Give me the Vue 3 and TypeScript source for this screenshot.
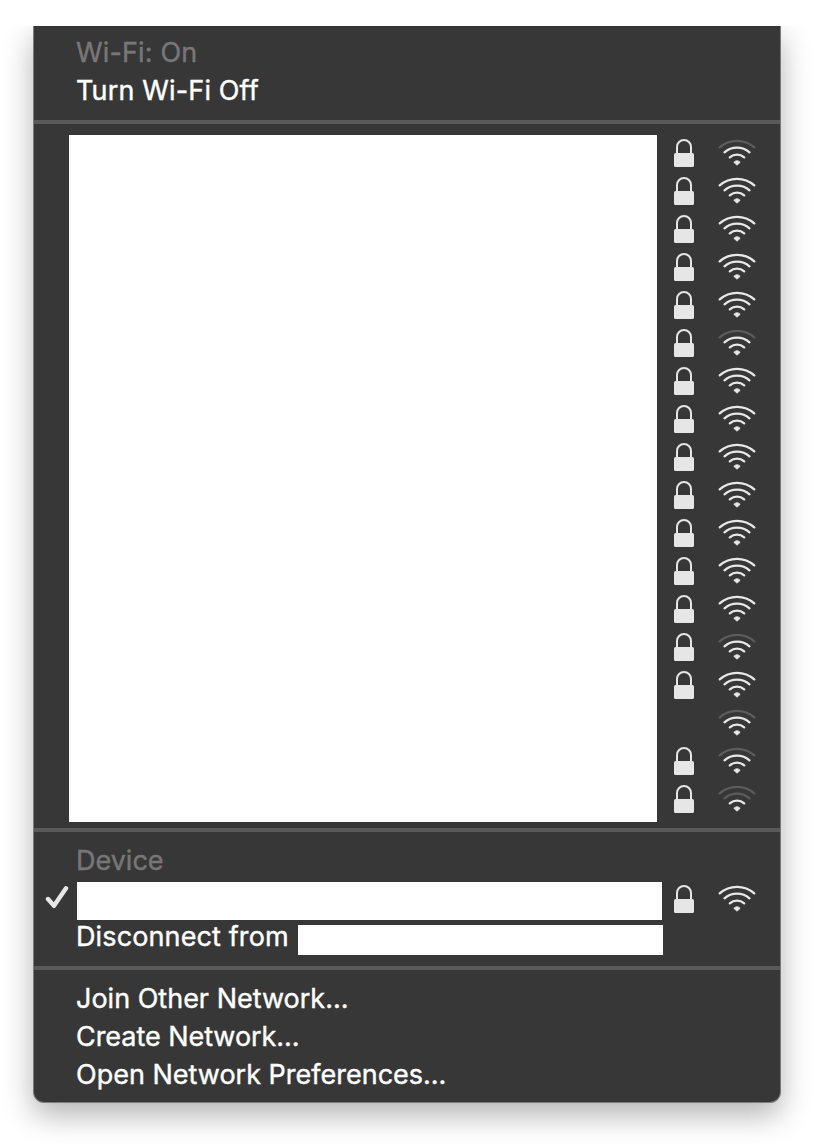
<script setup lang="ts">
interface Network {
  secured: boolean
  bars: number
}

// Signal strength of each listed network, from 0 to 3 arcs
const strengths: number[] = [2, 3, 3, 3, 3, 2, 3, 3, 3, 3, 3, 3, 3, 2, 3, 2, 2, 1]
const openNetworkIndex = 15

const networks: Network[] = strengths.map((bars, i) => ({
  bars,
  secured: i !== openNetworkIndex,
}))

const connected: Network = { secured: true, bars: 3 }

// Arcs from the innermost to the outermost
const arcs: string[] = [
  'M11.8 23.4A10.8 10.8 0 0 1 26.2 23.4',
  'M6.5 18.3A18.8 18.8 0 0 1 31.5 18.3',
  'M1.7 13.4A26 26 0 0 1 36.3 13.4',
]
const dot = 'M15.8 28.3Q19 25 22.2 28.3L19 31.2Z'
</script>

<template>
  <main class="stage">
    <div class="menu">
      <section class="group first">
        <div class="item muted"><span class="t-status">Wi-Fi: On</span></div>
        <div class="item"><span class="t-toggle">Turn Wi-Fi Off</span></div>
      </section>

      <section class="group list">
        <div class="names"></div>
        <div class="signals">
          <div v-for="(n, i) in networks" :key="i" class="signal">
            <svg v-if="n.secured" class="lock" viewBox="0 0 20 28">
              <path class="shackle" d="M3 15V8a7 7 0 0 1 14 0v7" />
              <rect y="14" width="20" height="14" rx="1.6" />
            </svg>
            <svg class="wifi" viewBox="0 0 38 38">
              <path
                v-for="(d, a) in arcs"
                :key="a"
                :d="d"
                class="arc"
                :class="{ off: a >= n.bars }"
              />
              <path class="dot" :d="dot" />
            </svg>
          </div>
        </div>
      </section>

      <section class="group">
        <div class="item muted"><span class="t-device">Device</span></div>
        <div class="item current">
          <svg class="check" viewBox="0 0 24 24">
            <path d="M3 14L9 20.8L21 3.2" />
          </svg>
          <div class="current-name"></div>
          <div class="signal">
            <svg class="lock" viewBox="0 0 20 28">
              <path class="shackle" d="M3 15V8a7 7 0 0 1 14 0v7" />
              <rect y="14" width="20" height="14" rx="1.6" />
            </svg>
            <svg class="wifi" viewBox="0 0 38 38">
              <path
                v-for="(d, a) in arcs"
                :key="a"
                :d="d"
                class="arc"
                :class="{ off: a >= connected.bars }"
              />
              <path class="dot" :d="dot" />
            </svg>
          </div>
        </div>
        <div class="item disconnect">
          <span class="t-disconnect">Disconnect from</span>
          <div class="disconnect-name"></div>
        </div>
      </section>

      <section class="group last">
        <div class="item"><span class="t-join">Join Other Network...</span></div>
        <div class="item"><span class="t-create">Create Network...</span></div>
        <div class="item"><span class="t-prefs">Open Network Preferences...</span></div>
      </section>
    </div>
  </main>
</template>

<style>
body {
  background: #fff;
}
</style>

<style scoped>
.stage {
  box-sizing: border-box;
  width: 814px;
  height: 1144px;
  padding: 26px 33px 0;
  overflow: hidden;
  background: #fff;
  clip-path: inset(26px 0 0 0);
}
.menu {
  box-sizing: border-box;
  width: 748px;
  height: 1077px;
  border: 1px solid #7c7c7c;
  border-top: 0;
  border-radius: 0 0 11px 11px;
  background: #373737;
  box-shadow: 0 12px 30px rgba(0, 0, 0, 0.3);
  color: #fff;
  font-family: Inter, "Liberation Sans", sans-serif;
  font-size: 27px;
  -webkit-text-stroke: 0.4px currentColor;
}
.group {
  padding: 10px 0;
  border-bottom: 4px solid #5a5a5a;
}
.group.first {
  padding-top: 8px;
}
.group.last {
  padding-bottom: 8px;
  border-bottom: 0;
}
.item {
  display: flex;
  height: 38px;
  padding-left: 42px;
  line-height: 37px;
  white-space: nowrap;
}
.muted {
  color: #777;
}
.list {
  display: flex;
  height: 684px;
  padding-left: 35px;
}
.names {
  width: 588px;
  height: 687px;
  margin-top: 1px;
  background: #fff;
}
.signals {
  margin-left: 17px;
}
.signal {
  display: flex;
  justify-content: flex-end;
  width: 82px;
  height: 38px;
}
.lock {
  width: 20px;
  height: 28px;
  margin: 5px 24px 0 0;
  fill: #e6e6e6;
}
.shackle {
  fill: none;
  stroke: #e6e6e6;
  stroke-width: 2;
}
.wifi {
  width: 38px;
  height: 38px;
}
.arc {
  fill: none;
  stroke: #e8e8e8;
  stroke-width: 2.3;
  stroke-linecap: round;
}
.arc.off {
  stroke: #5c5c5c;
}
.dot {
  fill: #e8e8e8;
  stroke: #e8e8e8;
  stroke-width: 0.8;
  stroke-linejoin: round;
}
.current {
  padding-left: 11px;
}
.check {
  width: 24px;
  height: 24px;
  margin: 5px 8px 0 0;
  fill: none;
  stroke: #e6e6e6;
  stroke-width: 4.4;
  stroke-linecap: round;
  stroke-linejoin: round;
}
.current-name {
  width: 585px;
  height: 38px;
  margin: 2px 12px 0 0;
  background: #fff;
}
.disconnect-name {
  width: 365px;
  height: 30px;
  margin-top: 7px;
  background: #fff;
}
.t-status,
.t-toggle {
  letter-spacing: 0.15px;
}
.t-disconnect {
  width: 222px;
  letter-spacing: 0.12px;
}
.t-create {
  letter-spacing: -0.05px;
}
</style>
